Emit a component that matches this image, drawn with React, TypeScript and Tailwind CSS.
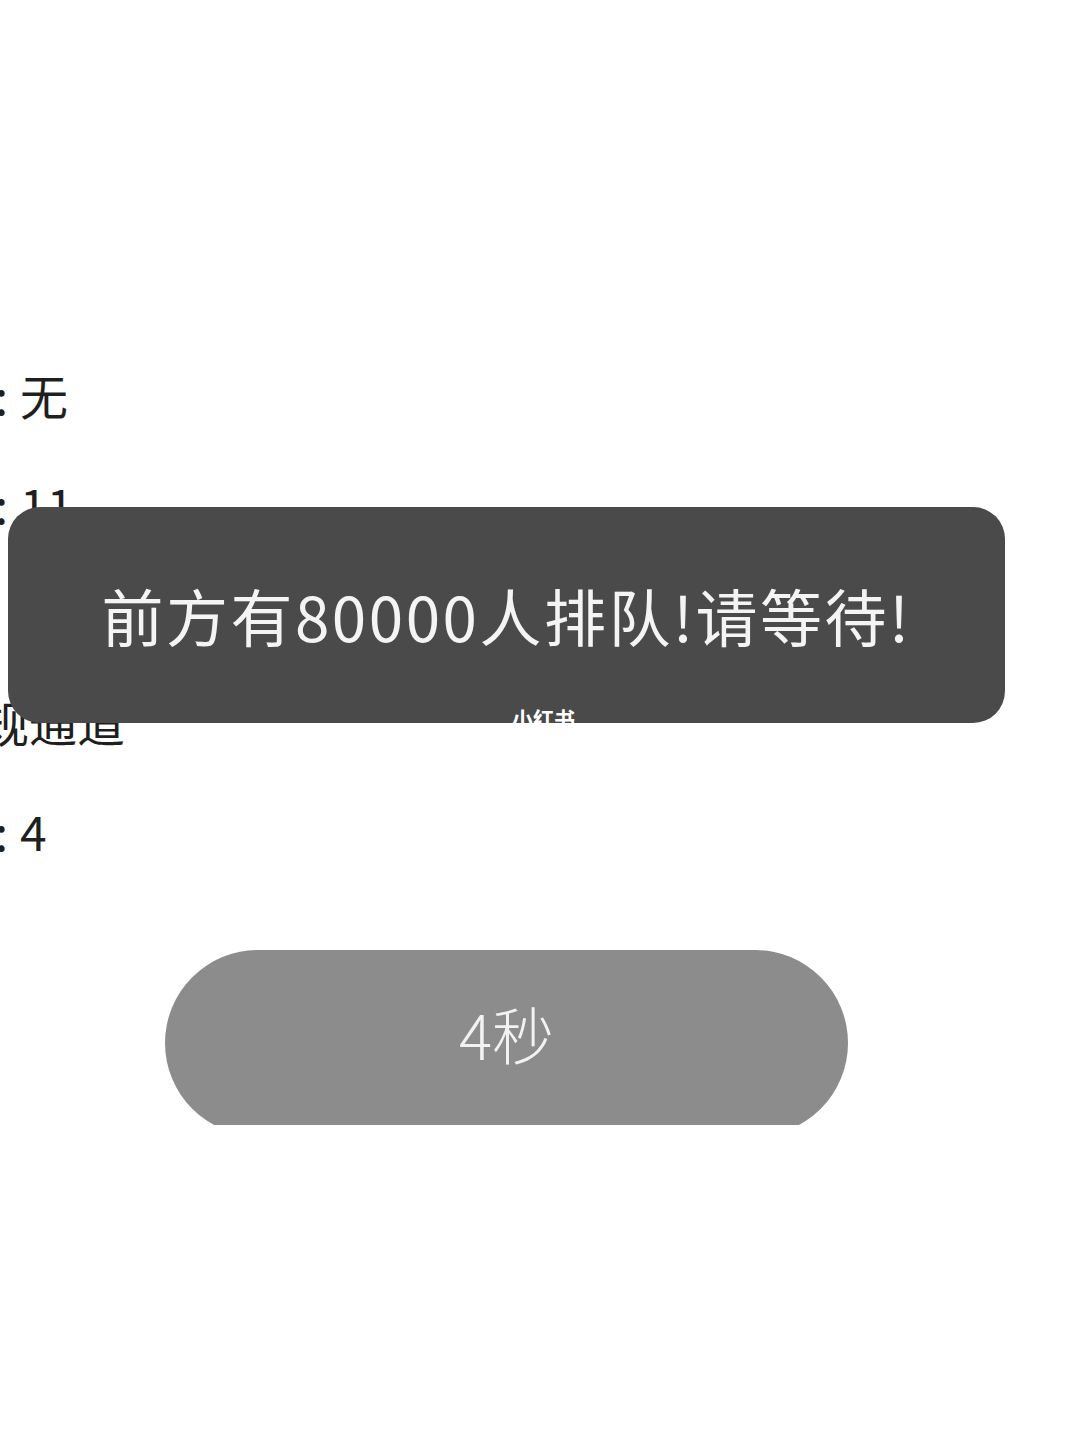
import React from 'react';

const rows = [
  { label: '预约人身份证号码:', value: '无', shift: 400 },
  { label: '剩余可预约名额:', value: '11', shift: 400 },
  { label: '', value: '通道类型', shift: 192 },
  { label: '', value: '常规通道', shift: 67 },
  { label: '当前批次:', value: '4', shift: 400 },
];

function Row({ label, value, shift }: { label: string; value: string; shift: number }) {
  if (!label) {
    return (
      <div className="flex h-[109px] items-center whitespace-nowrap" style={{ marginLeft: -shift }}>
        <span>{value}</span>
      </div>
    );
  }
  return (
    <div className="flex h-[109px] items-center -ml-[400px] whitespace-nowrap">
      <span className="w-[408px] text-right">{label}</span>
      <span className="ml-[12px]">{value}</span>
    </div>
  );
}

export default function App() {
  return (
    <div
      className="relative h-[1439px] w-[1080px] overflow-hidden bg-white text-[#1f1f1f]"
      style={{ fontFamily: '"Noto Sans CJK SC", "Noto Sans", sans-serif' }}
    >
      <div className="pt-[310px] text-[48px] leading-none">
        {/* top row, only the bottom of its glyphs shows */}
        <div className="h-[29px] overflow-hidden">
          <div className="-mt-[81px] flex h-[109px] items-center whitespace-nowrap pl-[6px] tracking-[24px] text-[#9a9a9a]">
            请核对预约信息后再进行提交
          </div>
        </div>
        {rows.map((r) => (
          <Row key={r.value} label={r.label} value={r.value} shift={r.shift} />
        ))}
      </div>

      <div className="ml-[165px] mt-[66px] h-[175px] w-[683px] overflow-hidden">
        <div className="flex h-[186px] items-start justify-center rounded-full bg-[#8c8c8c] pt-[52px]">
          <span className="text-[62px] font-light leading-none text-[#f2f2f2]">4秒</span>
        </div>
      </div>

      <div className="absolute left-[8px] top-[507px] flex h-[216px] w-[997px] items-center justify-center overflow-hidden rounded-[32px] bg-[#4a4a4a]">
        <span className="text-[62px] leading-none tracking-[2.5px] text-[#f4f4f4]">
          前方有80000人排队!请等待!
        </span>
        <span className="absolute bottom-[-6px] left-[504px] text-[21px] font-bold leading-none text-white">
          小红书
        </span>
      </div>
    </div>
  );
}
